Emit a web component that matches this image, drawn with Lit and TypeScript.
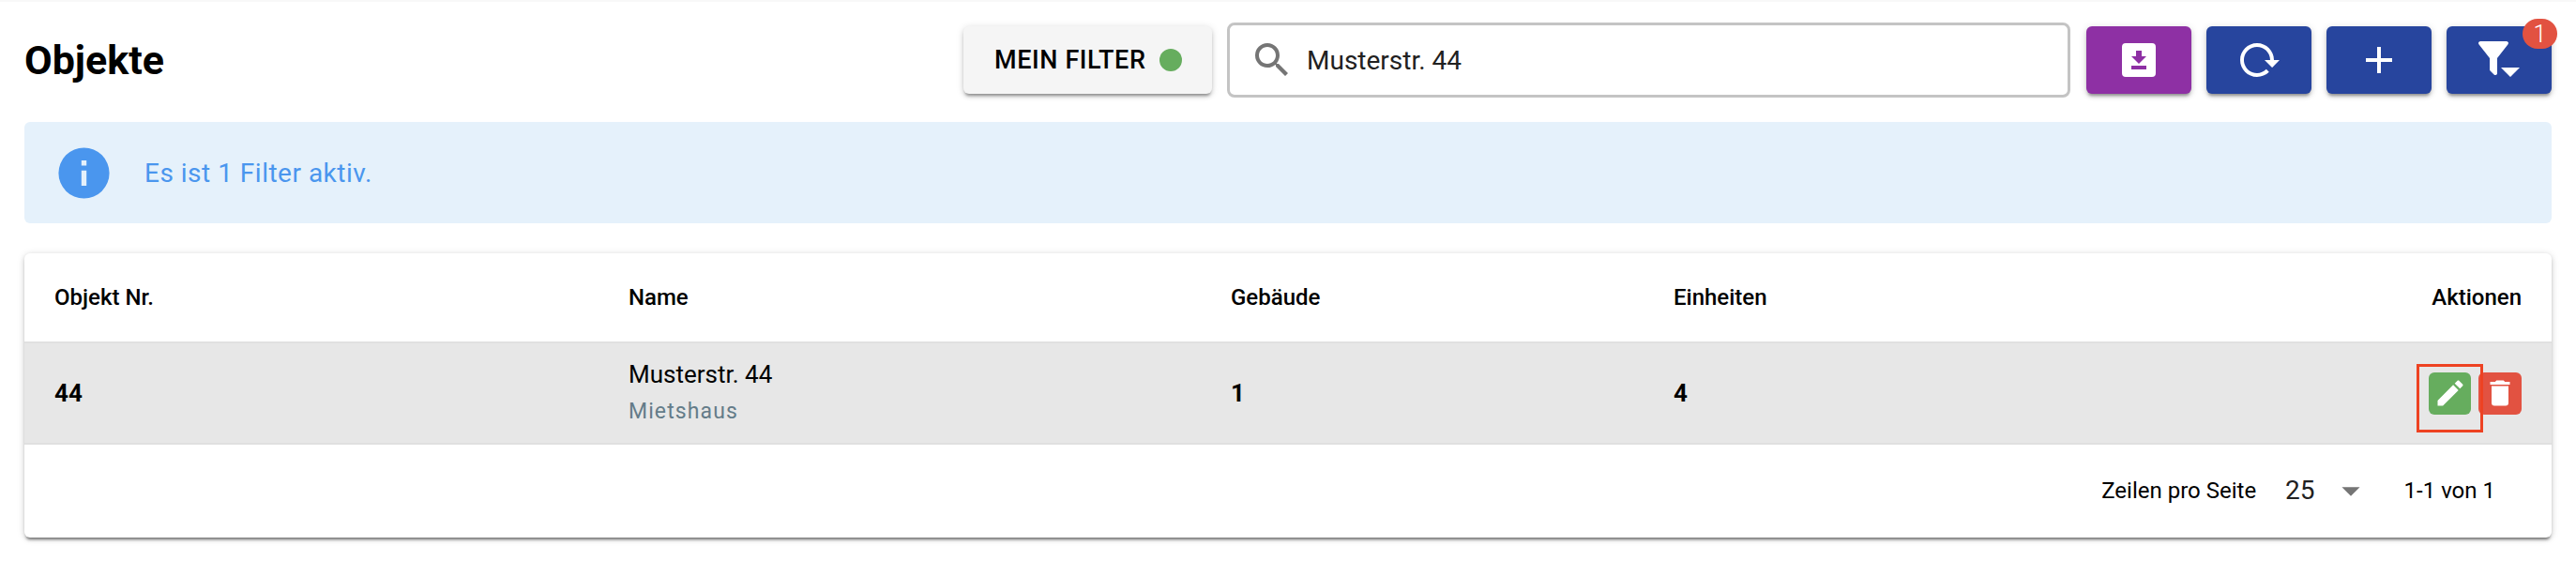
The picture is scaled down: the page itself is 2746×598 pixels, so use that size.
import { LitElement, html, css, svg } from "lit";
import { customElement } from "lit/decorators.js";

const P = {
  download: "M5,3H19A2,2 0 0,1 21,5V19A2,2 0 0,1 19,21H5A2,2 0 0,1 3,19V5A2,2 0 0,1 5,3M8,17H16V15H8V17M16,10H13.5V7H10.5V10H8L12,14L16,10Z",
  reload: "M2 12C2 16.97 6.03 21 11 21C13.39 21 15.68 20.06 17.4 18.4L15.9 16.9C14.63 18.25 12.86 19 11 19C4.76 19 1.64 11.46 6.05 7.05C10.46 2.64 18 5.77 18 12H15L19 16H19.1L23 12H20C20 7.03 15.97 3 11 3C6.03 3 2 7.03 2 12Z",
  plus: "M19,13H13V19H11V13H5V11H11V5H13V11H19V13Z",
  filter: "M11 11L16.76 3.62A1 1 0 0 0 16.59 2.22A1 1 0 0 0 16 2H2A1 1 0 0 0 1.38 2.22A1 1 0 0 0 1.21 3.62L7 11V16.87A1 1 0 0 0 7.29 17.7L9.29 19.7A1 1 0 0 0 10.7 19.7A1 1 0 0 0 11 18.87V11M13 16L18 21L23 16Z",
  search: "M9.5,3A6.5,6.5 0 0,1 16,9.5C16,11.11 15.41,12.59 14.44,13.73L14.71,14H15.5L20.5,19L19,20.5L14,15.5V14.71L13.73,14.44C12.59,15.41 11.11,16 9.5,16A6.5,6.5 0 0,1 3,9.5A6.5,6.5 0 0,1 9.5,3M9.5,5C7,5 5,7 5,9.5C5,12 7,14 9.5,14C12,14 14,12 14,9.5C14,7 12,5 9.5,5Z",
  pencil: "M20.71,7.04C21.1,6.65 21.1,6 20.71,5.63L18.37,3.29C18,2.9 17.35,2.9 16.96,3.29L15.12,5.12L18.87,8.87M3,17.25V21H6.75L17.81,9.93L14.06,6.18L3,17.25Z",
  trash: "M19,4H15.5L14.5,3H9.5L8.5,4H5V6H19M6,19A2,2 0 0,0 8,21H16A2,2 0 0,0 18,19V7H6V19Z",
  info: "M13,9H11V7H13M13,17H11V11H13M12,2A10,10 0 0,0 2,12A10,10 0 0,0 12,22A10,10 0 0,0 22,12A10,10 0 0,0 12,2Z",
  down: "M7,10L12,15L17,10H7Z",
};
const icon = (d: string, cls = "i48") =>
  html`<svg class=${cls} viewBox="0 0 24 24" fill="currentColor">${svg`<path d=${d}></path>`}</svg>`;

@customElement("app-root")
export class AppRoot extends LitElement {
  static styles = css`
    :host {
      display: block;
      height: 598px;
      background: #fff;
      font-family: Roboto, "Liberation Sans", sans-serif;
      color: #000;
      overflow: hidden;
    }
    svg { display: block; flex: none; }
    .i48 { width: 48px; height: 48px; }
    .i36 { width: 36px; height: 36px; }
    .i65 { width: 65px; height: 65px; }
    .i46 { width: 46px; height: 46px; }
    .topline { height: 2px; background: #f8f8f8; }
    .page { padding: 22px 26px 0; display: flex; flex-direction: column; }
    .head { display: flex; align-items: center; height: 80px; }
    h1 { margin: 0 auto 0 0; font-size: 43px; font-weight: 700; line-height: 1; padding-top: 1px; }
    .filter-btn {
      width: 265px; height: 72px; box-sizing: border-box;
      display: flex; align-items: center; gap: 14px; padding-left: 33px;
      background: #f5f5f5; border-radius: 6px;
      box-shadow: 0 4px 3px -2px rgba(0,0,0,.3), 0 3px 5px rgba(0,0,0,.14), 0 1px 8px rgba(0,0,0,.12);
      font-size: 27px; font-weight: 500; letter-spacing: .6px;
    }
    .dot { width: 24px; height: 24px; border-radius: 50%; background: #66ad5e; }
    .search {
      margin-left: 16px; width: 899px; height: 80px; box-sizing: border-box;
      border: 3px solid #c4c4c4; border-radius: 8px;
      display: flex; align-items: center; padding-left: 21px; gap: 13px;
      font-size: 28px; color: #212121;
    }
    .search svg { color: #757575; }
    .tools { display: flex; gap: 16px; margin-left: 17px; }
    .tool {
      position: relative; width: 112px; height: 72px; border-radius: 6px;
      display: flex; align-items: center; justify-content: center;
      color: #fff; background: #27459e;
      box-shadow: 0 4px 3px -2px rgba(0,0,0,.3), 0 3px 5px rgba(0,0,0,.14), 0 1px 8px rgba(0,0,0,.12);
    }
    .tool.purple { background: #8e30a4; }
    .badge {
      position: absolute; top: -8px; right: -6px; width: 37px; height: 32px; border-radius: 16px;
      background: #e25241; color: #fff; font-size: 25px; font-weight: 300;
      display: flex; align-items: center; justify-content: center;
    }
    .alert {
      margin-top: 26px; height: 108px; box-sizing: border-box;
      background: #e5f1fb; border-radius: 6px; color: #4a96ee;
      display: flex; align-items: center; padding-left: 31px; gap: 32px;
      font-size: 28px; letter-spacing: .5px;
    }
    .card {
      margin-top: 32px; height: 303px; background: #fff; border-radius: 6px;
      box-shadow: 0 4px 3px -2px rgba(0,0,0,.45), 0 2px 5px rgba(0,0,0,.14), 0 1px 8px rgba(0,0,0,.12);
      display: flex; flex-direction: column; overflow: hidden;
    }
    .rowgrid {
      display: grid; grid-template-columns: 612px 642px 472px 1fr auto;
      padding: 0 32px; align-items: center;
    }
    .thead { height: 94px; font-size: 24px; font-weight: 500; }
    .tbody {
      height: 110px; box-sizing: border-box; background: #e7e7e7;
      border-top: 2px solid #e0e0e0; border-bottom: 2px solid #e0e0e0;
      font-size: 26px;
    }
    .strong { font-weight: 700; }
    .name { font-size: 26px; line-height: 40px; }
    .sub { font-size: 23px; line-height: 40px; color: #647c89; letter-spacing: 1.1px; }
    .actions { display: flex; justify-content: flex-end; gap: 8px; }
    .act {
      position: relative; width: 45px; height: 45px; border-radius: 6px; color: #fff;
      display: flex; align-items: center; justify-content: center; background: #66ad5e;
    }
    .act.red { background: #e25241; width: 46px; }
    .mark {
      position: absolute; left: -13px; top: -9px; width: 71px; height: 73px; box-sizing: border-box;
      border: 3px solid #ee4222; z-index: 1;
    }
    .foot {
      flex: 1; display: flex; align-items: center; justify-content: flex-end;
      padding-right: 60px; font-size: 24px; padding-bottom: 2px;
    }
    .pp { font-size: 28px; margin-left: 31px; color: #212121; }
    .foot svg { color: #757575; margin-left: 15px; margin-right: 34px; }
  `;

  render() {
    return html`
      <div class="topline"></div>
      <div class="page">
        <div class="head">
          <h1>Objekte</h1>
          <div class="filter-btn"><span>MEIN FILTER</span><span class="dot"></span></div>
          <div class="search">${icon(P.search)}<span>Musterstr. 44</span></div>
          <div class="tools">
            <div class="tool purple">${icon(P.download)}</div>
            <div class="tool">${icon(P.reload)}</div>
            <div class="tool">${icon(P.plus)}</div>
            <div class="tool">${icon(P.filter)}<span class="badge">1</span></div>
          </div>
        </div>
        <div class="alert">${icon(P.info, "i65")}<span>Es ist 1 Filter aktiv.</span></div>
        <div class="card">
          <div class="rowgrid thead">
            <div>Objekt Nr.</div><div>Name</div><div>Gebäude</div><div>Einheiten</div>
            <div>Aktionen</div>
          </div>
          <div class="rowgrid tbody">
            <div class="strong">44</div>
            <div><div class="name">Musterstr. 44</div><div class="sub">Mietshaus</div></div>
            <div class="strong">1</div>
            <div class="strong">4</div>
            <div class="actions">
              <div class="act">${icon(P.pencil, "i36")}<span class="mark"></span></div>
              <div class="act red">${icon(P.trash, "i36")}</div>
            </div>
          </div>
          <div class="foot">
            <span>Zeilen pro Seite</span><span class="pp">25</span>${icon(P.down, "i46")}<span>1-1 von 1</span>
          </div>
        </div>
      </div>
    `;
  }
}
